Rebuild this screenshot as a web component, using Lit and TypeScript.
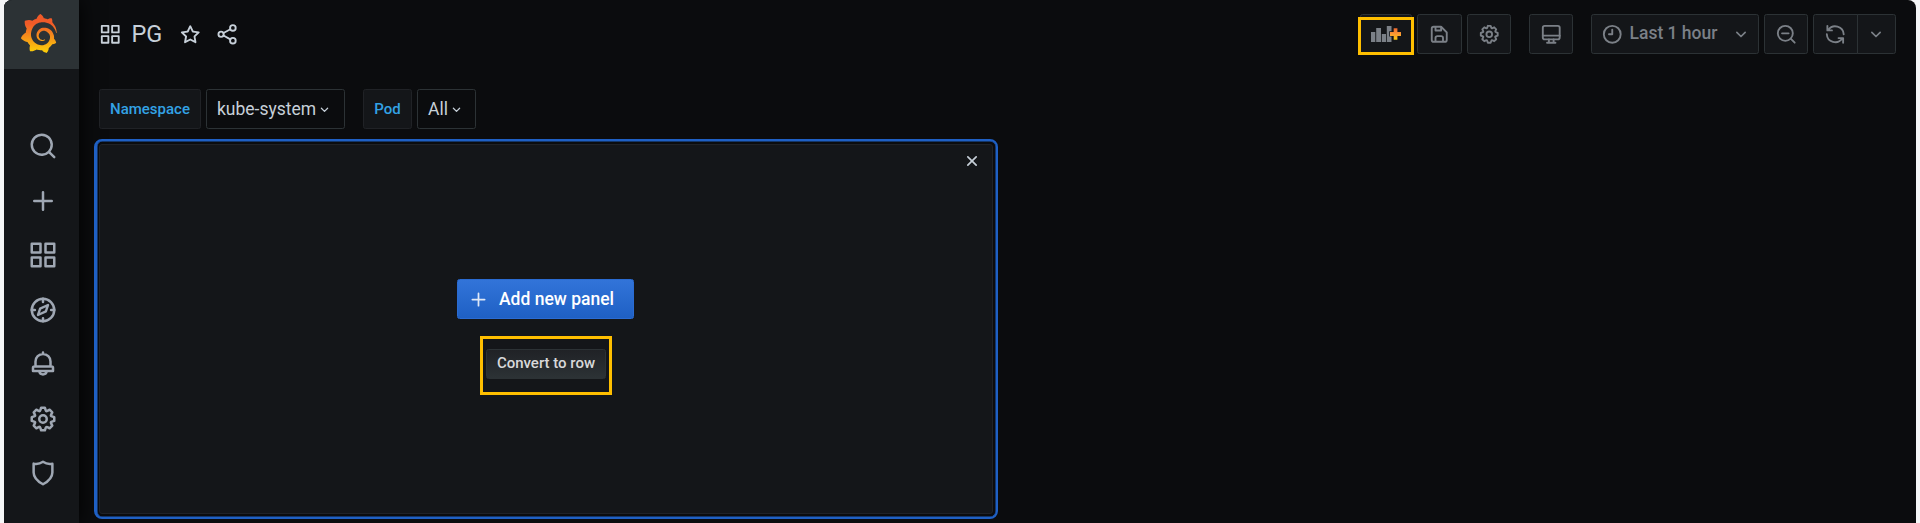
import { LitElement, html, css, svg } from "lit";
import { customElement, property } from "lit/decorators.js";

const ICONS: Record<string, unknown> = {
  search: svg`<path d="M21.71,20.29,18,16.61A9,9,0,1,0,16.61,18l3.68,3.68a1,1,0,0,0,1.42,0A1,1,0,0,0,21.71,20.29ZM11,18a7,7,0,1,1,7-7A7,7,0,0,1,11,18Z"/>`,
  plus: svg`<path d="M19,11H13V5a1,1,0,0,0-2,0v6H5a1,1,0,0,0,0,2h6v6a1,1,0,0,0,2,0V13h6a1,1,0,0,0,0-2Z"/>`,
  apps: svg`<path d="M10,13H3a1,1,0,0,0-1,1v7a1,1,0,0,0,1,1h7a1,1,0,0,0,1-1V14A1,1,0,0,0,10,13ZM9,20H4V15H9ZM21,2H14a1,1,0,0,0-1,1v7a1,1,0,0,0,1,1h7a1,1,0,0,0,1-1V3A1,1,0,0,0,21,2ZM20,9H15V4h5Zm1,4H14a1,1,0,0,0-1,1v7a1,1,0,0,0,1,1h7a1,1,0,0,0,1-1V14A1,1,0,0,0,21,13Zm-1,7H15V15h5ZM10,2H3A1,1,0,0,0,2,3v7a1,1,0,0,0,1,1h7a1,1,0,0,0,1-1V3A1,1,0,0,0,10,2ZM9,9H4V4H9Z"/>`,
  star: svg`<path d="M22,9.67A1,1,0,0,0,21.14,9l-5.69-.83L12.9,3a1,1,0,0,0-1.8,0L8.55,8.16,2.86,9a1,1,0,0,0-.81.68,1,1,0,0,0,.25,1l4.13,4-1,5.68A1,1,0,0,0,6.9,21.44L12,18.77l5.1,2.67a.93.93,0,0,0,.46.12,1,1,0,0,0,.59-.19,1,1,0,0,0,.4-1l-1-5.68,4.13-4A1,1,0,0,0,22,9.67Zm-6.15,4a1,1,0,0,0-.29.88l.72,4.2-3.76-2a1.06,1.06,0,0,0-.94,0l-3.76,2,.72-4.2a1,1,0,0,0-.29-.88l-3-3,4.21-.61a1,1,0,0,0,.76-.55L12,5.7l1.88,3.82a1,1,0,0,0,.76.55l4.21.61Z"/>`,
  cog: svg`<path d="M21.32,9.55l-1.89-.63.89-1.78A1,1,0,0,0,20.13,6L18,3.87a1,1,0,0,0-1.15-.19l-1.78.89-.63-1.89A1,1,0,0,0,13.5,2h-3a1,1,0,0,0-.95.68L8.92,4.57,7.14,3.68A1,1,0,0,0,6,3.87L3.87,6a1,1,0,0,0-.19,1.15l.89,1.78-1.89.63A1,1,0,0,0,2,10.5v3a1,1,0,0,0,.68.95l1.89.63-.89,1.78A1,1,0,0,0,3.87,18L6,20.13a1,1,0,0,0,1.15.19l1.78-.89.63,1.89a1,1,0,0,0,.95.68h3a1,1,0,0,0,.95-.68l.63-1.89,1.78.89A1,1,0,0,0,18,20.13L20.13,18a1,1,0,0,0,.19-1.15l-.89-1.78,1.89-.63A1,1,0,0,0,22,13.5v-3A1,1,0,0,0,21.32,9.55ZM20,12.78l-1.2.4A2,2,0,0,0,17.64,16l.57,1.14-1.1,1.1L16,17.64a2,2,0,0,0-2.79,1.16l-.4,1.2H11.22l-.4-1.2A2,2,0,0,0,8,17.64l-1.14.57-1.1-1.1L6.36,16A2,2,0,0,0,5.2,13.18L4,12.78V11.22l1.2-.4A2,2,0,0,0,6.36,8L5.79,6.89l1.1-1.1L8,6.36A2,2,0,0,0,10.82,5.2l.4-1.2h1.56l.4,1.2A2,2,0,0,0,16,6.36l1.14-.57,1.1,1.1L17.64,8a2,2,0,0,0,1.16,2.79l1.2.4ZM12,8a4,4,0,1,0,4,4A4,4,0,0,0,12,8Zm0,6a2,2,0,1,1,2-2A2,2,0,0,1,12,14Z"/>`,
  save: svg`<path d="M20.71,9.29l-6-6a1,1,0,0,0-.32-.21A1.09,1.09,0,0,0,14,3H6A3,3,0,0,0,3,6V18a3,3,0,0,0,3,3H18a3,3,0,0,0,3-3V10A1,1,0,0,0,20.71,9.29ZM9,5h4V7H9Zm6,14H9V16a1,1,0,0,1,1-1h4a1,1,0,0,1,1,1Zm4-1a1,1,0,0,1-1,1H17V16a3,3,0,0,0-3-3H10a3,3,0,0,0-3,3v3H6a1,1,0,0,1-1-1V6A1,1,0,0,1,6,5H7V8A1,1,0,0,0,8,9h6a1,1,0,0,0,1-1V6.41l4,4Z"/>`,
  share: svg`<g class="s"><circle cx="18" cy="5.2" r="3"/><circle cx="18" cy="18.8" r="3"/><circle cx="5.4" cy="12" r="2.8"/><path d="M8 10.7 15.3 6.7M8 13.3 15.3 17.4"/></g>`,
  compass: svg`<g class="s"><circle cx="12" cy="12" r="9"/><path d="M12 3V5.5M12 18.5V21M3 12H5.5M18.500 12H21"/><path d="M16 8 14.300 13.100 8 16 9.700 10.900Z" stroke-width="1.900"/></g>`,
  bell: svg`<g class="s"><path d="M12 2.800V4M6 14V10a6 6 0 0 1 12 0V14M5 14H19a1 1 0 0 1 1 1V17.600H4V15a1 1 0 0 1 1-1ZM9 18a3.100 3.100 0 0 0 6 0"/></g>`,
  shield: svg`<g class="s"><path d="M12 3Q8.500 5.300 4.500 4.500V11.500C4.500 15.500 7 18.200 12 21C17 18.200 19.500 15.500 19.500 11.500V4.500Q15.500 5.300 12 3Z"/></g>`,
  monitor: svg`<g class="s"><rect x="3" y="3" width="18" height="14.500" rx="2"/><path d="M3 13.500H21M9.500 17.500V20.500M14.500 17.500V20.500M7.500 21H16.500"/></g>`,
  clock: svg`<g class="s"><circle cx="12" cy="12" r="9"/><path d="M12 7V12H8.500"/></g>`,
  down: svg`<g class="s"><path d="M7 10 12 15 17 10"/></g>`,
  zoomout: svg`<g class="s"><circle cx="11" cy="11" r="8"/><path d="M17 17 21 21M7.500 11H14.500"/></g>`,
  sync: svg`<g class="s"><path d="M3.600 3V7.900H8.500M4.600 7.400A9 9 0 0 1 21 12M20.400 21V16.100H15.500M19.400 16.600A9 9 0 0 1 3 12"/></g>`,
  times: svg`<g class="s"><path d="M7 7 17 17M17 7 7 17"/></g>`,
};

@customElement("ui-icon")
class UiIcon extends LitElement {
  @property() name = "";
  static styles = css`
    :host { display: block; flex: none; width: 22.5px; height: 22.5px; }
    svg { display: block; width: 100%; height: 100%; fill: currentColor; overflow: visible; }
    .s { fill: none; stroke: currentColor; stroke-width: 2; stroke-linecap: round; stroke-linejoin: round; }
  `;
  render() {
    return html`<svg viewBox="0 0 24 24">${ICONS[this.name]}</svg>`;
  }
}

const SWIRL =
  "M342,161.2c-0.6-6.1-1.6-13.1-3.6-20.9c-2-7.7-5-16.2-9.4-25c-4.4-8.8-10.1-17.9-17.5-26.8c-2.9-3.5-6.1-6.9-9.5-10.2c5.1-20.3-6.2-37.9-6.2-37.9c-19.5-1.2-31.9,6.1-36.5,9.4c-0.8-0.3-1.5-0.7-2.3-1c-3.3-1.3-6.7-2.6-10.3-3.7c-3.5-1.1-7.1-2.1-10.8-3c-3.7-0.9-7.4-1.6-11.2-2.2c-0.7-0.1-1.3-0.2-2-0.3c-8.5-27.2-32.9-38.6-32.9-38.6c-27.3,17.3-32.4,41.5-32.4,41.5s-0.1,0.5-0.3,1.4c-1.5,0.4-3,0.9-4.5,1.3c-2.1,0.6-4.2,1.4-6.2,2.2c-2.1,0.8-4.1,1.6-6.2,2.5c-4.1,1.8-8.2,3.8-12.2,6c-3.9,2.2-7.7,4.6-11.4,7.1c-0.5-0.2-1-0.4-1-0.4c-37.8-14.4-71.3,2.9-71.3,2.9c-3.1,40.2,15.1,65.5,18.7,70.1c-0.9,2.5-1.7,5-2.5,7.5c-2.8,9.1-4.9,18.4-6.2,28.1c-0.2,1.4-0.4,2.8-0.5,4.2C18.8,192.7,8.5,228,8.5,228c29.1,33.5,63.1,35.6,63.1,35.6c0,0,0.1-0.1,0.1-0.1c4.3,7.7,9.3,15,14.9,21.9c2.4,2.9,4.8,5.6,7.4,8.3c-10.6,30.4,1.5,55.6,1.5,55.6c32.4,1.2,53.7-14.2,58.2-17.7c3.2,1.1,6.5,2.1,9.8,2.9c10,2.6,20.2,4.1,30.4,4.5c2.5,0.1,5.1,0.2,7.6,0.1l1.2,0l0.8,0l1.6,0l1.6-0.1l0,0.1c15.3,21.8,42.1,24.9,42.1,24.9c19.1-20.1,20.2-40.1,20.2-44.4l0,0c0,0,0-0.1,0-0.3c0-0.4,0-0.6,0-0.6l0,0c0-0.3,0-0.6,0-0.9c4-2.8,7.8-5.8,11.4-9.1c7.6-6.9,14.3-14.8,19.9-23.3c0.5-0.8,1-1.6,1.5-2.4c21.6,1.2,36.9-13.4,36.9-13.4c-3.6-22.5-16.4-33.5-19.1-35.6l0,0c0,0-0.1-0.1-0.3-0.2c-0.2-0.1-0.2-0.2-0.2-0.2c0,0,0,0,0,0c-0.1-0.1-0.3-0.2-0.5-0.3c0.1-1.4,0.2-2.7,0.3-4.1c0.2-2.4,0.2-4.9,0.2-7.3l0-1.8l0-0.9l0-0.5c0-0.6,0-0.4,0-0.6l-0.1-1.5l-0.1-2c0-0.7-0.1-1.3-0.2-1.9c-0.1-0.6-0.1-1.3-0.2-1.9l-0.2-1.9l-0.3-1.9c-0.4-2.5-0.8-4.9-1.4-7.4c-2.3-9.7-6.1-18.9-11-27.2c-5-8.3-11.2-15.6-18.3-21.8c-7-6.2-14.9-11.2-23.1-14.9c-8.3-3.7-16.9-6.1-25.5-7.2c-4.3-0.6-8.6-0.8-12.9-0.7l-1.6,0l-0.4,0c-0.1,0-0.6,0-0.5,0l-0.7,0l-1.6,0.1c-0.6,0-1.2,0.1-1.7,0.1c-2.2,0.2-4.4,0.5-6.5,0.9c-8.6,1.6-16.7,4.7-23.8,9c-7.1,4.3-13.3,9.6-18.3,15.6c-5,6-8.9,12.7-11.6,19.6c-2.7,6.9-4.2,14.1-4.6,21c-0.1,1.7-0.1,3.5-0.1,5.2c0,0.4,0,0.9,0,1.3l0.1,1.4c0.1,0.8,0.1,1.7,0.2,2.5c0.3,3.5,1,6.9,1.9,10.1c1.9,6.5,4.9,12.4,8.6,17.4c3.7,5,8.2,9.1,12.9,12.4c4.7,3.2,9.8,5.5,14.8,7c5,1.5,10,2.1,14.7,2.1c0.6,0,1.2,0,1.7,0c0.3,0,0.6,0,0.9,0c0.3,0,0.6,0,0.9-0.1c0.5,0,1-0.1,1.5-0.1c0.1,0,0.3,0,0.4-0.1l0.5-0.1c0.3,0,0.6-0.1,0.9-0.1c0.6-0.1,1.1-0.2,1.7-0.3c0.6-0.1,1.1-0.2,1.6-0.4c1.1-0.2,2.1-0.6,3.1-0.9c2-0.7,4-1.5,5.7-2.4c1.8-0.9,3.4-2,5-3c0.4-0.3,0.9-0.6,1.3-1c1.6-1.3,1.9-3.7,0.6-5.3c-1.1-1.4-3.1-1.8-4.7-0.9c-0.4,0.2-0.8,0.4-1.2,0.6c-1.4,0.7-2.8,1.3-4.3,1.8c-1.5,0.5-3.1,0.9-4.7,1.2c-0.8,0.1-1.6,0.2-2.5,0.3c-0.4,0-0.8,0.1-1.3,0.1c-0.4,0-0.9,0-1.2,0c-0.4,0-0.8,0-1.2,0c-0.5,0-1,0-1.5-0.1l-0.3,0l-0.2,0c-0.2,0-0.3,0-0.5,0c-0.3,0-0.7-0.1-1-0.1c-3.7-0.5-7.4-1.5-10.9-3.1c-3.6-1.6-7-3.8-10.1-6.6c-3.1-2.8-5.8-6.1-7.9-9.9c-2.1-3.8-3.6-8-4.3-12.4c-0.3-2.2-0.5-4.5-0.4-6.7c0-0.6,0.1-1.2,0.1-1.8l0-0.3l0-0.5c0-0.3,0.1-0.6,0.1-0.9c0.1-1.2,0.3-2.4,0.5-3.6c1.7-9.6,6.5-19,13.9-26.1c1.9-1.8,3.9-3.4,6-4.9c2.1-1.5,4.4-2.8,6.8-3.9c2.4-1.1,4.8-2,7.4-2.7c2.5-0.7,5.1-1.1,7.8-1.4c1.3-0.1,2.6-0.2,4-0.2c0.4,0,0.6,0,0.9,0l1.1,0l0.7,0l0.4,0l1.1,0.1c2.9,0.2,5.7,0.6,8.5,1.3c5.6,1.2,11.1,3.3,16.2,6.1c10.2,5.7,18.9,14.5,24.2,25.1c2.7,5.3,4.6,11,5.5,16.9c0.2,1.5,0.4,3,0.5,4.5l0.1,1.1l0.1,1.1c0,0.4,0,0.8,0,1.1c0,0.4,0,0.8,0,1.1l0,1l0,1.1c0,0.7-0.1,1.9-0.1,2.6c-0.1,1.6-0.3,3.3-0.5,4.9c-0.2,1.6-0.5,3.2-0.8,4.8c-0.3,1.6-0.7,3.2-1.1,4.7c-0.8,3.1-1.8,6.2-3,9.3c-2.4,6-5.6,11.8-9.4,17.1c-7.7,10.6-18.2,19.2-30.2,24.7c-6,2.7-12.3,4.7-18.8,5.7c-3.2,0.6-6.5,0.9-9.8,1l-0.6,0l-0.5,0l-1.1,0l-1.6,0l-0.8,0l-0.4,0c-1.8,0-3.5-0.1-5.3-0.3c-7-0.5-13.9-1.8-20.7-3.7c-6.7-1.9-13.2-4.6-19.4-7.8c-12.3-6.6-23.4-15.6-32-26.5c-4.3-5.4-8.1-11.3-11.2-17.4c-3.1-6.1-5.6-12.6-7.4-19.1c-1.8-6.6-2.9-13.3-3.4-20.1l-0.1-1.3l0-0.3l0-0.3l0-0.6l0-1.1l0-0.3l0-0.4l0-0.8l0-1.6l0-0.3l0-0.7c0-0.8,0-1.7,0-2.5c0.1-3.3,0.4-6.8,0.8-10.2c0.4-3.4,1-6.9,1.7-10.3c0.7-3.4,1.5-6.8,2.5-10.2c1.9-6.7,4.3-13.2,7.1-19.3c5.7-12.2,13.1-23.1,22-31.8c2.2-2.2,4.5-4.2,6.9-6.2c2.4-1.9,4.9-3.7,7.5-5.4c2.5-1.7,5.2-3.2,7.9-4.6c1.3-0.7,2.7-1.4,4.1-2c1.4-0.6,2.8-1.2,4.2-1.8c2.8-1.2,5.7-2.2,8.7-3.1c1.5-0.5,2.9-0.9,4.4-1.3c1.5-0.4,3-0.8,4.5-1.1c1.5-0.4,3-0.7,4.6-1c1.5-0.2,3-0.4,4.6-0.8c3-0.4,6-0.7,10.1-1.1c2.9-0.3,6-0.4,9-0.5c2.9-0.1,5.9-0.1,8.8,0c5.8,0.2,11.5,0.9,17,1.9c11.1,2.1,21.5,5.6,31,10.3c9.5,4.6,17.9,10.3,25.3,16.5c0.9,0.8,1.8,1.6,2.7,2.4c1.7,1.6,3.4,3.2,5.1,4.8c0.8,0.8,1.6,1.6,2.4,2.5c3.1,3.3,6,6.6,8.6,10c5.2,6.7,9.4,13.5,12.7,19.9c0.8,1.6,1.6,3.2,2.3,4.8c0.7,1.5,1.4,3,2.1,4.6c1.2,3,2.4,5.9,3.3,8.6c1.5,4.4,2.6,8.3,3.5,11.7c0.3,1.4,1.6,2.3,3,2.1c1.5-0.1,2.6-1.3,2.6-2.8C342.6,170.4,342.5,166.1,342,161.2z";

const NAV = ["search", "plus", "apps", "compass", "bell", "cog", "shield"];

@customElement("app-root")
class AppRoot extends LitElement {
  static styles = css`
    :host { display: block; width: 1920px; height: 523px; background: #f5f6f7; font-family: Roboto, "Liberation Sans", sans-serif; color: #c7d0d9; overflow: hidden; }
    * { box-sizing: border-box; }
    .app { display: flex; width: 1912px; height: 523px; margin-left: 4px; background: #0b0c0e; border-radius: 8px 8px 0 0; overflow: hidden; }
    .side { width: 75px; flex: none; background: #141619; box-shadow: 0 0 20px #000; color: #9fa7b3; display: flex; flex-direction: column; }
    .logo { height: 69px; background: #2c3235; display: flex; align-items: center; padding: 0 0 2px 16px; }
    .logo svg { width: 37.5px; height: 39px; }
    .nav { display: flex; flex-direction: column; gap: 24.5px; padding: 62px 0 0 24px; }
    .nav ui-icon { width: 30px; height: 30px; }
    .main { flex: 1; min-width: 0; padding: 14px 20px 0 15px; }
    .bar { display: flex; align-items: center; height: 40px; }
    .title { display: flex; align-items: center; flex: 1; padding-left: 5px; }
    .name { font-size: 23.5px; line-height: 28px; margin: 0 17px 0 10px; }
    .star { margin-right: 14.5px; }
    .btn { height: 40px; width: 44px; border: 1px solid #2c3235; border-radius: 2.5px; background: #141619; color: #7b8087; display: flex; align-items: center; justify-content: center; margin-left: 5px; flex: none; }
    .add { width: 52px; position: relative; margin: 0; }
    .add svg { width: 30px; height: 16px; }
    .ring { position: absolute; border: 3px solid #ffbf00; }
    .add .ring { left: -3px; top: 2px; width: 56px; height: 38px; }
    .save { width: 45px; }
    .tv { margin-left: 18px; }
    .time { width: 168px; margin-left: 18px; justify-content: flex-start; padding-left: 9px; font-size: 17.5px; font-weight: 500; }
    .time span { flex: 1; padding: 0 0 3px 6px; white-space: nowrap; }
    .time .caret { margin-right: 7px; }
    .caret { width: 20px; height: 20px; }
    .refresh { width: 45px; border-radius: 2.5px 0 0 2.5px; }
    .more { width: 39px; margin-left: -1px; border-radius: 0 2.5px 2.5px 0; padding-right: 1px; }
    .vars { display: flex; height: 40px; margin-top: 35px; padding-left: 5px; gap: 5px; }
    .label, .value { display: flex; align-items: center; border-radius: 2.5px; border: 1px solid #202226; white-space: nowrap; }
    .label { background: #141619; color: #33a2e5; font-size: 15px; font-weight: 500; justify-content: center; width: 102px; }
    .value { border-color: #2c3235; font-size: 17.5px; padding-left: 10px; width: 139px; gap: 1px; }
    .value ui-icon { width: 15px; height: 15px; }
    .pod { width: 49px; margin-left: 13px; }
    .all { width: 59px; }
    .frame { width: 904px; height: 380px; margin-top: 10px; border: 2.5px solid #1f60c4; border-width: 2px 2px 2px 3px; box-shadow: inset 0 0 0 0.5px #1f60c4; border-radius: 8px; padding: 3px 3px 3px 2px; }
    .panel { height: 370px; border: 1px solid #202226; border-radius: 3px; background: #141619; display: flex; flex-direction: column; align-items: center; }
    .close { align-self: flex-end; width: 20px; height: 20px; margin: 6px 10px 0 0; }
    .new { display: flex; align-items: center; width: 177px; height: 40px; margin: 108px 1px 0 0; border: 1px solid #2a6bd2; border-radius: 2.5px; background: linear-gradient(#3274d9, #1f60c4); color: #fff; font-size: 17.5px; font-weight: 500; padding-left: 10px; gap: 10px; white-space: nowrap; }
    .new ui-icon { width: 21px; height: 21px; opacity: .85; }
    .convert { position: relative; width: 120px; height: 30px; margin-top: 30px; border: 1px solid #2c3235; border-radius: 2.5px; background: linear-gradient(#202226, #2c3235); font-size: 15px; font-weight: 500; display: flex; align-items: center; justify-content: center; padding-bottom: 2px; white-space: nowrap; color: #d8d9da; }
    .convert .ring { left: -7px; top: -14px; width: 132px; height: 59px; }
  `;

  render() {
    return html`<div class="app">
      <nav class="side">
        <div class="logo">
          <svg viewBox="0 0 351 365">
            <defs><linearGradient id="g" x1="0" x2="0" y1="1" y2="0"><stop offset="0.05" stop-color="#fbca0a"/><stop offset="0.75" stop-color="#f05a28"/></linearGradient></defs>
            <path fill="url(#g)" d=${SWIRL} />
          </svg>
        </div>
        <div class="nav">${NAV.map((n) => html`<ui-icon name=${n}></ui-icon>`)}</div>
      </nav>
      <main class="main">
        <header class="bar">
          <div class="title">
            <ui-icon name="apps"></ui-icon><span class="name">PG</span>
            <ui-icon class="star" name="star"></ui-icon><ui-icon name="share"></ui-icon>
          </div>
          <div class="btn add">
            <svg viewBox="0 0 30 16">
              <defs><linearGradient id="p" x1="0" x2="0" y1="0" y2="1"><stop offset="0" stop-color="#f0672c"/><stop offset="0.5" stop-color="#f99a35"/><stop offset="1" stop-color="#fbca0a"/></linearGradient></defs>
              <path fill="#7b8087" d="M0 6h4.300v10H0zM5.200 2h4.800v14H5.200zM10.800 8h4.200v8h-4.200zM15.800 0h4.700v5.300h-2.300v5.200h2.300v5.500h-4.700z"/>
              <path fill="url(#p)" d="M22.700 2.300h3.700v3.700h3.600v3.900h-3.600v3.800h-3.700v-3.800h-3.700v-3.900h3.700z"/>
            </svg>
            <div class="ring"></div>
          </div>
          <div class="btn save"><ui-icon name="save"></ui-icon></div>
          <div class="btn"><ui-icon name="cog"></ui-icon></div>
          <div class="btn tv"><ui-icon name="monitor"></ui-icon></div>
          <div class="btn time"><ui-icon name="clock"></ui-icon><span>Last 1 hour</span><ui-icon class="caret" name="down"></ui-icon></div>
          <div class="btn"><ui-icon name="zoomout"></ui-icon></div>
          <div class="btn refresh"><ui-icon name="sync"></ui-icon></div>
          <div class="btn more"><ui-icon class="caret" name="down"></ui-icon></div>
        </header>
        <section class="vars">
          <div class="label">Namespace</div>
          <div class="value">kube-system<ui-icon name="down"></ui-icon></div>
          <div class="label pod">Pod</div>
          <div class="value all">All<ui-icon name="down"></ui-icon></div>
        </section>
        <section class="frame">
          <div class="panel">
            <ui-icon class="close" name="times"></ui-icon>
            <div class="new"><ui-icon name="plus"></ui-icon>Add new panel</div>
            <div class="convert">Convert to row<div class="ring"></div></div>
          </div>
        </section>
      </main>
    </div>`;
  }
}
